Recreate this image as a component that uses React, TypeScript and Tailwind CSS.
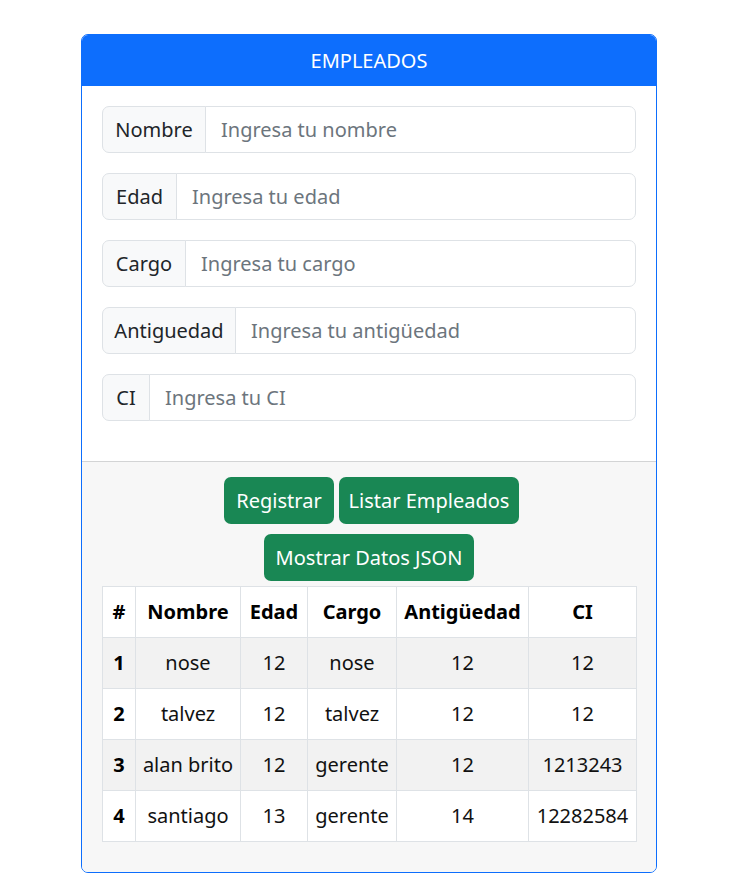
const font = { fontFamily: '"Noto Sans", "Open Sans", sans-serif' };

const campos = [
  { label: "Nombre", placeholder: "Ingresa tu nombre", w: "w-[104px]" },
  { label: "Edad", placeholder: "Ingresa tu edad", w: "w-[75px]" },
  { label: "Cargo", placeholder: "Ingresa tu cargo", w: "w-[84px]" },
  { label: "Antiguedad", placeholder: "Ingresa tu antigüedad", w: "w-[134px]" },
  { label: "CI", placeholder: "Ingresa tu CI", w: "w-[48px]" },
];

const empleados = [
  { id: 1, nombre: "nose", edad: 12, cargo: "nose", antiguedad: 12, ci: "12" },
  { id: 2, nombre: "talvez", edad: 12, cargo: "talvez", antiguedad: 12, ci: "12" },
  { id: 3, nombre: "alan brito", edad: 12, cargo: "gerente", antiguedad: 12, ci: "1213243" },
  { id: 4, nombre: "santiago", edad: 13, cargo: "gerente", antiguedad: 14, ci: "12282584" },
];

function Boton({ children, w }: { children: string; w: string }) {
  return (
    <button
      className={`${w} h-[47px] rounded-[7px] bg-[#198754] text-[20px] leading-[30px] text-white`}
    >
      {children}
    </button>
  );
}

export default function App() {
  return (
    <div className="min-h-[895px] bg-white pt-[34px] text-[#212529]" style={font}>
      <div className="ml-[81px] w-[576px] overflow-hidden rounded-[7px] border border-[#0d6efd]">
        <div className="flex h-[51px] items-center justify-center border-b border-[#0d6efd] bg-[#0d6efd] pt-[2px] text-[20px] text-white">
          EMPLEADOS
        </div>
        <div className="flex flex-col gap-[20px] p-[20px] pb-[40px]">
          {campos.map((c) => (
            <div key={c.label} className="flex h-[47px]">
              <span
                className={`${c.w} flex shrink-0 items-center justify-center rounded-l-[7px] border border-[#dee2e6] bg-[#f8f9fa] text-[20px]`}
              >
                {c.label}
              </span>
              <input
                className="-ml-px min-w-0 flex-1 rounded-r-[7px] border border-[#dee2e6] bg-white px-[15px] text-[20px] outline-none placeholder:text-[#6c757d]"
                placeholder={c.placeholder}
              />
            </div>
          ))}
        </div>
        <div className="border-t border-[#d3d4d5] bg-[#f7f7f7] px-[20px] pb-[30px] pt-[15px]">
          <div className="flex justify-center gap-[5px] pl-[5px]">
            <Boton w="w-[110px]">Registrar</Boton>
            <Boton w="w-[180px]">Listar Empleados</Boton>
          </div>
          <div className="mt-[10px] flex justify-center">
            <Boton w="w-[210px]">Mostrar Datos JSON</Boton>
          </div>
          <table className="mt-[5px] w-[534px] table-fixed border-collapse bg-white text-center text-[20px] leading-[30px] text-[#111]">
            <colgroup>
              <col className="w-[33px]" />
              <col className="w-[105px]" />
              <col className="w-[67px]" />
              <col className="w-[89px]" />
              <col className="w-[132px]" />
              <col className="w-[108px]" />
            </colgroup>
            <thead>
              <tr className="h-[51px]">
                {["#", "Nombre", "Edad", "Cargo", "Antigüedad", "CI"].map((h) => (
                  <th key={h} className="border border-[#dee2e6] p-0 font-bold text-black">
                    {h}
                  </th>
                ))}
              </tr>
            </thead>
            <tbody>
              {empleados.map((e, i) => (
                <tr key={e.id} className={`h-[51px] ${i % 2 === 0 ? "bg-[#f2f2f2]" : "bg-white"}`}>
                  <th className="border border-[#dee2e6] p-0 font-bold text-black">{e.id}</th>
                  <td className="border border-[#dee2e6] p-0">{e.nombre}</td>
                  <td className="border border-[#dee2e6] p-0">{e.edad}</td>
                  <td className="border border-[#dee2e6] p-0">{e.cargo}</td>
                  <td className="border border-[#dee2e6] p-0">{e.antiguedad}</td>
                  <td className="border border-[#dee2e6] p-0">{e.ci}</td>
                </tr>
              ))}
            </tbody>
          </table>
        </div>
      </div>
    </div>
  );
}
